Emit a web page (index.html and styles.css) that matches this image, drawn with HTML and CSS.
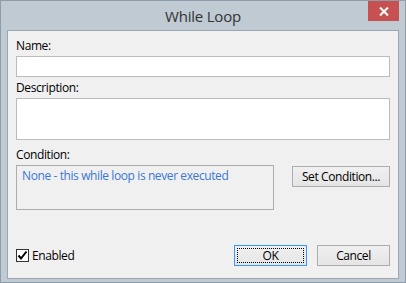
FILE: index.html
```html
<!DOCTYPE html>
<html lang="en">

<head>
    <meta charset="UTF-8">
    <link rel="stylesheet" href="styles.css">
    <title>While Loop</title>
</head>

<body>
    <div class="window">
        <div class="titlebar">
            <span class="title">While Loop</span>
            <div class="close">
                <svg width="10" height="9" viewBox="0 0 10 9">
                    <path d="M1 0.5 L9 8.5 M9 0.5 L1 8.5" stroke="#fff" stroke-width="2" />
                </svg>
            </div>
        </div>
        <div class="client">
            <label class="label first">Name:</label>
            <div class="textbox name"></div>

            <label class="label">Description:</label>
            <div class="textbox description"></div>

            <label class="label condition-label">Condition:</label>
            <div class="condition-row">
                <div class="condition-box">None - this while loop is never executed</div>
                <div class="button set-condition">Set Condition...</div>
            </div>

            <div class="footer">
                <div class="checkbox-row">
                    <span class="checkbox">
                        <svg width="11" height="11" viewBox="0 0 11 11">
                            <path d="M1.5 5.5 L4 8.5 L9.5 1.5" stroke="#000" stroke-width="2" fill="none" />
                        </svg>
                    </span>
                    <span>Enabled</span>
                </div>
                <div class="buttons">
                    <div class="button ok"><span>OK</span></div>
                    <div class="button">Cancel</div>
                </div>
            </div>
        </div>
    </div>
</body>

</html>
```

FILE: styles.css
```css
* {
    box-sizing: border-box;
}

body {
    margin: 0;
    font-family: 'Open Sans', 'Noto Sans', sans-serif;
    font-size: 12px;
    letter-spacing: -0.4px;
    color: #000;
}

.window {
    width: 406px;
    height: 283px;
    border: 1px solid #8e9dab;
    background-color: #bfcad3;
    display: flex;
    flex-direction: column;
}

.titlebar {
    height: 29px;
    position: relative;
    display: flex;
    justify-content: center;
    align-items: center;
}

.title {
    font-size: 15px;
    letter-spacing: -0.2px;
    color: #333;
    padding-top: 1px;
}

.close {
    position: absolute;
    top: 0;
    right: 6px;
    width: 31px;
    height: 20px;
    background-color: #c75050;
    display: flex;
    justify-content: center;
    align-items: center;
}

.client {
    margin: 0 6px;
    height: 249px;
    border: 1px solid #9ba8b4;
    background-color: #f0f0f0;
    padding: 7px 8px 12px 8px;
    display: flex;
    flex-direction: column;
}

.label {
    display: block;
    line-height: 16px;
    margin-top: 3px;
    margin-bottom: 2px;
}

.label.first {
    margin-top: 0;
}

.label.condition-label {
    margin-top: 7px;
}

.textbox {
    background-color: white;
    border: 1px solid #bcbcbc;
}

.name {
    height: 21px;
}

.description {
    height: 42px;
}

.condition-row {
    display: flex;
    align-items: flex-start;
    justify-content: space-between;
}

.condition-box {
    width: 258px;
    height: 45px;
    border: 1px solid #adadad;
    color: #3a78d4;
    padding: 2px 5px;
    line-height: 16px;
}

.button {
    height: 21px;
    border: 1px solid #acacac;
    background: linear-gradient(#f0f0f0, #e5e5e5);
    display: flex;
    justify-content: center;
    align-items: center;
}

.set-condition {
    width: 98px;
    margin-top: 1px;
}

.footer {
    margin-top: auto;
    display: flex;
    justify-content: space-between;
    align-items: center;
}

.checkbox-row {
    display: flex;
    align-items: center;
    gap: 3px;
}

.checkbox {
    width: 13px;
    height: 13px;
    border: 1px solid #333;
    background-color: white;
    display: flex;
    justify-content: center;
    align-items: center;
}

.buttons {
    display: flex;
    gap: 10px;
}

.buttons .button {
    width: 73px;
}

.ok {
    border-color: #3399ff;
    padding: 2px;
}

.ok span {
    width: 100%;
    height: 100%;
    border: 1px dotted #000;
    display: flex;
    justify-content: center;
    align-items: center;
}
```
